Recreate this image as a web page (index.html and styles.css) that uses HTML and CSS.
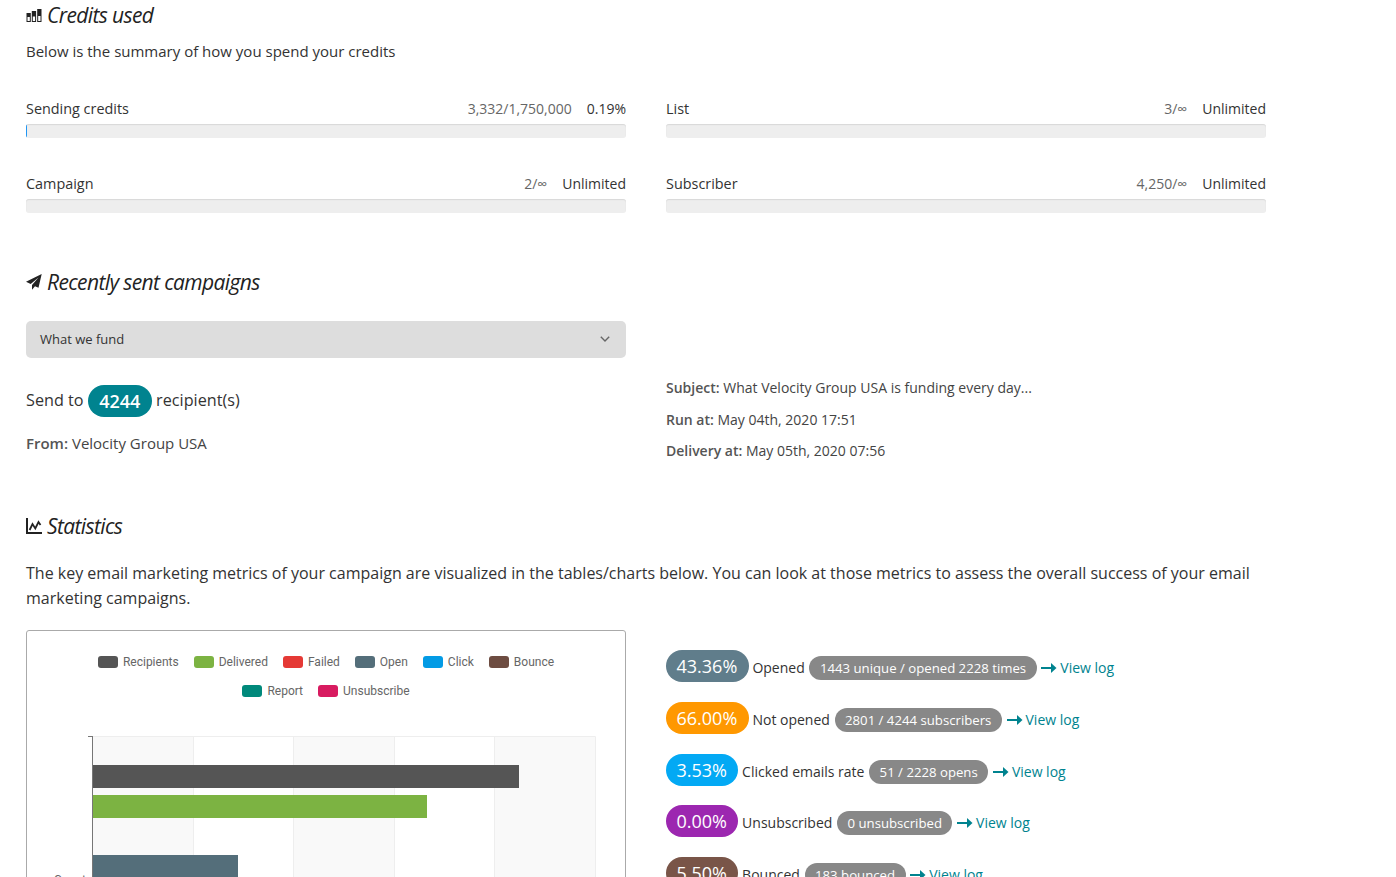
FILE: index.html
```html
<!DOCTYPE html>
<html lang="en">
<head>
<meta charset="utf-8">
<title>Campaign overview</title>
<link rel="stylesheet" href="styles.css">
</head>
<body>
<main class="page">
  <h2 class="heading heading-first">
    <svg class="hicon" width="16" height="15" viewBox="0 0 16 15"><path d="M.5 5h4.300v9H.500zM5.800 3h4.300v11H5.800zM11.200 1H15.500v13h-4.300z" fill="#222"/><path d="M1.500 9h2.300v4H1.500zM6.800 8.500h2.300V13H6.800zM12.200 8h2.300v5h-2.300z" fill="#fff"/></svg>
    Credits used
  </h2>
  <p class="lead">Below is the summary of how you spend your credits</p>

  <section class="meters">
    <div class="meter">
      <div class="meter-row"><span class="meter-name">Sending credits</span><span class="meter-count">3,332/1,750,000</span><span class="meter-pct">0.19%</span></div>
      <div class="track"><div class="fill" style="width:0.19%"></div></div>
    </div>
    <div class="meter">
      <div class="meter-row"><span class="meter-name">List</span><span class="meter-count">3/∞</span><span class="meter-pct">Unlimited</span></div>
      <div class="track"></div>
    </div>
    <div class="meter">
      <div class="meter-row"><span class="meter-name">Campaign</span><span class="meter-count">2/∞</span><span class="meter-pct">Unlimited</span></div>
      <div class="track"></div>
    </div>
    <div class="meter">
      <div class="meter-row"><span class="meter-name">Subscriber</span><span class="meter-count">4,250/∞</span><span class="meter-pct">Unlimited</span></div>
      <div class="track"></div>
    </div>
  </section>

  <h2 class="heading heading-sent">
    <svg class="hicon" width="16" height="16" viewBox="0 0 16 16"><path d="M15.700 0 0 7.700l4.700 2.300L12.500 3.500 6 11v4.800l3-3.500 3.500 1.500z" fill="#222"/></svg>
    Recently sent campaigns
  </h2>

  <div class="two-col">
    <div>
      <div class="select">
        <span>What we fund</span>
        <svg width="10" height="6" viewBox="0 0 10 6"><path d="M.8.8 5 5l4.200-4.200" fill="none" stroke="#666" stroke-width="1.400"/></svg>
      </div>
      <p class="send">Send to <span class="badge-count">4244</span> recipient(s)</p>
      <p class="meta meta-from"><b>From:</b> Velocity Group USA</p>
    </div>
    <div class="subject">
      <p class="meta"><b>Subject:</b> What Velocity Group USA is funding every day...</p>
      <p class="meta"><b>Run at:</b> May 04th, 2020 17:51</p>
      <p class="meta"><b>Delivery at:</b> May 05th, 2020 07:56</p>
    </div>
  </div>

  <h2 class="heading heading-stats">
    <svg class="hicon" width="16" height="16" viewBox="0 0 16 16"><path d="M1 0v15H16" fill="none" stroke="#222" stroke-width="2"/><path d="M3.600 12 6.500 6l2.800 4.500L12.500 4l2 3" fill="none" stroke="#222" stroke-width="1.800"/></svg>
    Statistics
  </h2>
  <p class="intro">The key email marketing metrics of your campaign are visualized in the tables/charts below. You can look at those metrics to assess the overall success of your email marketing campaigns.</p>

  <div class="two-col stats-grid">
    <div class="chart">
      <ul class="legend">
        <li><i class="sw c-rec"></i>Recipients</li>
        <li><i class="sw c-del"></i>Delivered</li>
        <li><i class="sw c-fail"></i>Failed</li>
        <li><i class="sw c-open"></i>Open</li>
        <li><i class="sw c-click"></i>Click</li>
        <li><i class="sw c-bounce"></i>Bounce</li>
        <li><i class="sw c-report"></i>Report</li>
        <li><i class="sw c-unsub"></i>Unsubscribe</li>
      </ul>
      <svg class="plot" width="598" height="200" viewBox="0 0 598 200">
        <rect x="66" y="0" width="100" height="200" fill="#f9f9f9"/>
        <rect x="267" y="0" width="100" height="200" fill="#f9f9f9"/>
        <rect x="467" y="0" width="101" height="200" fill="#f9f9f9"/>
        <path d="M66 .5H568.500V200M166.500 0V200M266.500 0V200M367.500 0V200M467.500 0V200" fill="none" stroke="#eee"/>
        <path d="M61 .5h5M65.500 0V200" fill="none" stroke="#777"/>
        <rect x="66" y="29" width="426" height="23" fill="#555"/>
        <rect x="66" y="59" width="334" height="23" fill="#7cb342"/>
        <rect x="66" y="119" width="145" height="23" fill="#546e7a"/>
        <text x="27" y="148" class="axis">Count</text>
      </svg>
    </div>
    <ul class="rates">
      <li><span class="pct c-open">43.36%</span> Opened <span class="pill">1443 unique / opened 2228 times</span> <a class="log" href="#"><svg width="16" height="10" viewBox="0 0 16 10"><path d="M0 5h11" stroke="#00838f" stroke-width="2"/><path d="M10 0l5.500 5L10 10z" fill="#00838f"/></svg>View log</a></li>
      <li><span class="pct c-orange">66.00%</span> Not opened <span class="pill">2801 / 4244 subscribers</span> <a class="log" href="#"><svg width="16" height="10" viewBox="0 0 16 10"><path d="M0 5h11" stroke="#00838f" stroke-width="2"/><path d="M10 0l5.500 5L10 10z" fill="#00838f"/></svg>View log</a></li>
      <li><span class="pct c-sky">3.53%</span> Clicked emails rate <span class="pill">51 / 2228 opens</span> <a class="log" href="#"><svg width="16" height="10" viewBox="0 0 16 10"><path d="M0 5h11" stroke="#00838f" stroke-width="2"/><path d="M10 0l5.500 5L10 10z" fill="#00838f"/></svg>View log</a></li>
      <li><span class="pct c-purple">0.00%</span> Unsubscribed <span class="pill">0 unsubscribed</span> <a class="log" href="#"><svg width="16" height="10" viewBox="0 0 16 10"><path d="M0 5h11" stroke="#00838f" stroke-width="2"/><path d="M10 0l5.500 5L10 10z" fill="#00838f"/></svg>View log</a></li>
      <li><span class="pct c-bounce">5.50%</span> Bounced <span class="pill">183 bounced</span> <a class="log" href="#"><svg width="16" height="10" viewBox="0 0 16 10"><path d="M0 5h11" stroke="#00838f" stroke-width="2"/><path d="M10 0l5.500 5L10 10z" fill="#00838f"/></svg>View log</a></li>
    </ul>
  </div>
</main>
</body>
</html>
```
FILE: styles.css
```css
* { box-sizing: border-box; }
html, body { margin: 0; height: 100%; overflow: hidden; background: #fff; }
body { font-family: "Open Sans", sans-serif; font-size: 14px; color: #333; }
.page { width: 1240px; margin-left: 26px; }
.heading { margin: 0; display: flex; align-items: center; gap: 5px; font-size: 21px; font-weight: 400; font-style: italic; line-height: 28px; color: #222; letter-spacing: -0.62px; }
.hicon { flex: none; }
.heading-first { margin-top: 1px; }
.lead { margin: 12px 0 0; font-size: 15px; line-height: 21px; color: #333; }
.meters { display: grid; grid-template-columns: 600px 600px; column-gap: 40px; row-gap: 36px; margin-top: 37px; }
.meter-row { display: flex; align-items: baseline; line-height: 20px; margin-bottom: 5px; }
.meter-name { font-size: 14.400px; margin-right: auto; color: #333; }
.meter-count { font-size: 14px; color: #666; margin-right: 15px; }
.meter-pct { font-size: 14px; color: #333; }
.track { height: 14px; border-radius: 3px; background: #eee; box-shadow: inset 0 1px 1px #d8d8d8; overflow: hidden; }
.fill { height: 100%; background: #2196f3; }
.heading-sent { margin-top: 55px; }
.two-col { display: grid; grid-template-columns: 600px 600px; column-gap: 40px; }
.heading-sent + .two-col { margin-top: 25px; }
.select { height: 37px; padding: 0 16px 1px 14px; background: #ddd; border-radius: 5px; display: flex; align-items: center; justify-content: space-between; font-size: 13px; color: #333; }
.send { margin: 27px 0 0; font-size: 16.200px; line-height: 31px; height: 32px; color: #333; }
.badge-count { display: inline-block; padding: 0 11.500px; height: 32px; line-height: 33px; border-radius: 16px; background: #00838f; color: #fff; font-weight: 600; font-size: 18px; vertical-align: top; }
.meta { margin: 0 0 11.500px; font-size: 14px; line-height: 20px; color: #444; }
.meta b { font-weight: 600; color: #555; }
.meta-from { margin-top: 16px; font-size: 15px; }
.subject { padding-top: 57px; }
.heading-stats { margin-top: 39px; }
.intro { margin: 21px 0 0; font-size: 16px; line-height: 25px; color: #333; }
.stats-grid { margin-top: 19px; }
.chart { height: 400px; border: 1px solid #aaa; border-radius: 3px; padding-top: 17px; }
.legend { list-style: none; margin: 0; padding: 0 40px; display: flex; flex-wrap: wrap; justify-content: center; column-gap: 15px; font-family: Roboto, sans-serif; font-size: 12px; color: #666; }
.legend li { display: flex; align-items: center; gap: 5px; height: 29px; }
.sw { display: block; width: 20px; height: 12px; border-radius: 3px; }
.plot { display: block; margin-top: 30px; }
.axis { font-family: Roboto, sans-serif; font-size: 12px; fill: #666; }
.rates { list-style: none; margin: 20.700px 0 0; padding: 0; }
.rates li { height: 32px; margin-bottom: 19.700px; font-size: 14px; line-height: 35px; color: #333; white-space: nowrap; }
.pct { display: inline-block; height: 32px; padding: 0 11.500px 0 10.500px; border-radius: 16px; font-size: 18px; color: #fff; line-height: 33px; vertical-align: top; }
.pill { display: inline-block; height: 24px; margin: 6px 0 0 1px; padding: 0 10.500px; border-radius: 12px; background: #888; color: #fff; font-size: 13.200px; line-height: 25px; vertical-align: top; }
.log { color: #00838f; text-decoration: none; margin-left: 1px; }
.log svg { margin-right: 3px; vertical-align: 0; }
.c-rec { background: #555; }
.c-del { background: #7cb342; }
.c-fail { background: #e53935; }
.c-open { background: #546e7a; }
.c-click { background: #039be5; }
.c-bounce { background: #6d4c41; }
.c-report { background: #00897b; }
.c-unsub { background: #d81b60; }
.pct.c-open { background: #607d8b; }
.pct.c-bounce { background: #795548; }
.c-orange { background: #ff9800; }
.c-sky { background: #03a9f4; }
.c-purple { background: #9c27b0; }
```
